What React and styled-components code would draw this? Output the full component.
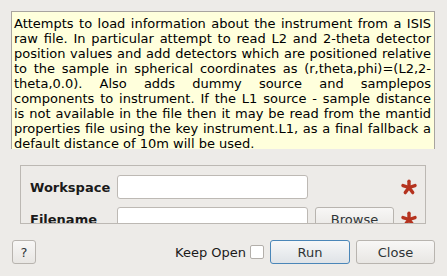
import styled, { createGlobalStyle } from "styled-components";

const GlobalStyle = createGlobalStyle`
  html, body { margin: 0; padding: 0; background: #edebe8; }
  body { font-family: "DejaVu Sans", Verdana, sans-serif; font-size: 13px; color: #1a1a1a; }
`;

const lines = [
  "Attempts to load information about the instrument from a ISIS",
  "raw file. In particular attempt to read L2 and 2-theta detector",
  "position values and add detectors which are positioned relative",
  "to the sample in spherical coordinates as (r,theta,phi)=(L2,2-",
  "theta,0.0). Also adds dummy source and samplepos",
  "components to instrument.  If the L1 source - sample distance",
  "is not available in the file then it may be read from the mantid",
  "properties file using the key instrument.L1, as a final fallback a",
  "default distance of 10m will be used.",
];

const Dialog = styled.div`
  width: 447px;
  height: 276px;
  box-sizing: border-box;
  padding: 11px 12px 0 11px;
  display: flex;
  flex-direction: column;
  background: #edebe8;
  overflow: hidden;
`;

const Description = styled.div`
  height: 138px;
  flex-shrink: 0;
  box-sizing: border-box;
  border: 1px solid #a8a49f;
  border-bottom: none;
  background: #ffffdc;
  padding: 4px 3px 0 2px;
  overflow: hidden;
  font-size: 13px;
  line-height: 15px;
  color: #000;
`;

const Line = styled.div`
  white-space: nowrap;
  text-align: justify;
  text-align-last: ${(p) => (p.last ? "left" : "justify")};
`;

const Group = styled.div`
  margin: 16px 0 0 9px;
  width: 406px;
  height: 59px;
  flex-shrink: 0;
  box-sizing: border-box;
  border: 1px solid #bcb8b3;
  padding: 9px 0 0 9px;
  display: flex;
  flex-direction: column;
  gap: 8px;
  overflow: hidden;
`;

const Row = styled.div`
  display: flex;
  align-items: center;
  height: 24px;
  flex-shrink: 0;
`;

const Label = styled.div`
  width: 87px;
  font-weight: bold;
  font-size: 13px;
  color: #1a1a1a;
`;

const Input = styled.div`
  width: 191px;
  height: 24px;
  box-sizing: border-box;
  background: #fff;
  border: 1px solid #bdb9b4;
  border-radius: 3px;
`;

const Button = styled.button`
  width: ${(p) => p.w || 80}px;
  height: 24px;
  flex-shrink: 0;
  box-sizing: border-box;
  padding: 0;
  font-family: "DejaVu Sans", Verdana, sans-serif;
  font-size: 13px;
  color: #2e3436;
  border-radius: 3px;
  border: 1px solid ${(p) => (p.primary ? "#4a86b8" : "#b8b4af")};
  background: ${(p) =>
    p.primary
      ? "linear-gradient(#f6f7f8, #dfe3e7)"
      : "linear-gradient(#f8f7f6, #e8e6e3)"};
`;

const Spacer = styled.div`
  width: ${(p) => p.w}px;
  flex-shrink: 0;
`;

const Footer = styled.div`
  margin-top: 16px;
  height: 24px;
  display: flex;
  align-items: center;
  padding-left: 1px;
`;

const KeepOpen = styled.span`
  margin-left: auto;
  font-size: 13px;
  color: #1a1a1a;
`;

const Check = styled.span`
  display: inline-block;
  width: 14px;
  height: 14px;
  box-sizing: border-box;
  margin: 0 6px 0 4px;
  background: #fff;
  border: 1px solid #b3afaa;
  border-radius: 2px;
`;

const Star = () => (
  <svg width="16" height="16" viewBox="0 0 16 16">
    <g stroke="#b5331f" strokeWidth="3.4" strokeLinecap="round">
      {[0, 72, 144, 216, 288].map((a) => (
        <line
          key={a}
          x1="8"
          y1="8.5"
          x2={8 + 6.3 * Math.sin((a * Math.PI) / 180)}
          y2={8.5 - 6.3 * Math.cos((a * Math.PI) / 180)}
        />
      ))}
    </g>
  </svg>
);

export default function App() {
  return (
    <>
      <GlobalStyle />
      <Dialog>
        <Description>
          {lines.map((l, i) => (
            <Line key={i} last={i === lines.length - 1}>
              {l}
            </Line>
          ))}
        </Description>
        <Group>
          <Row>
            <Label>Workspace</Label>
            <Input />
            <Spacer w={93} />
            <Star />
          </Row>
          <Row>
            <Label>Filename</Label>
            <Input />
            <Spacer w={7} />
            <Button w={79}>Browse</Button>
            <Spacer w={7} />
            <Star />
          </Row>
        </Group>
        <Footer>
          <Button w={24}>?</Button>
          <KeepOpen>Keep Open</KeepOpen>
          <Check />
          <Button primary w={80}>Run</Button>
          <Spacer w={6} />
          <Button w={79}>Close</Button>
        </Footer>
      </Dialog>
    </>
  );
}
